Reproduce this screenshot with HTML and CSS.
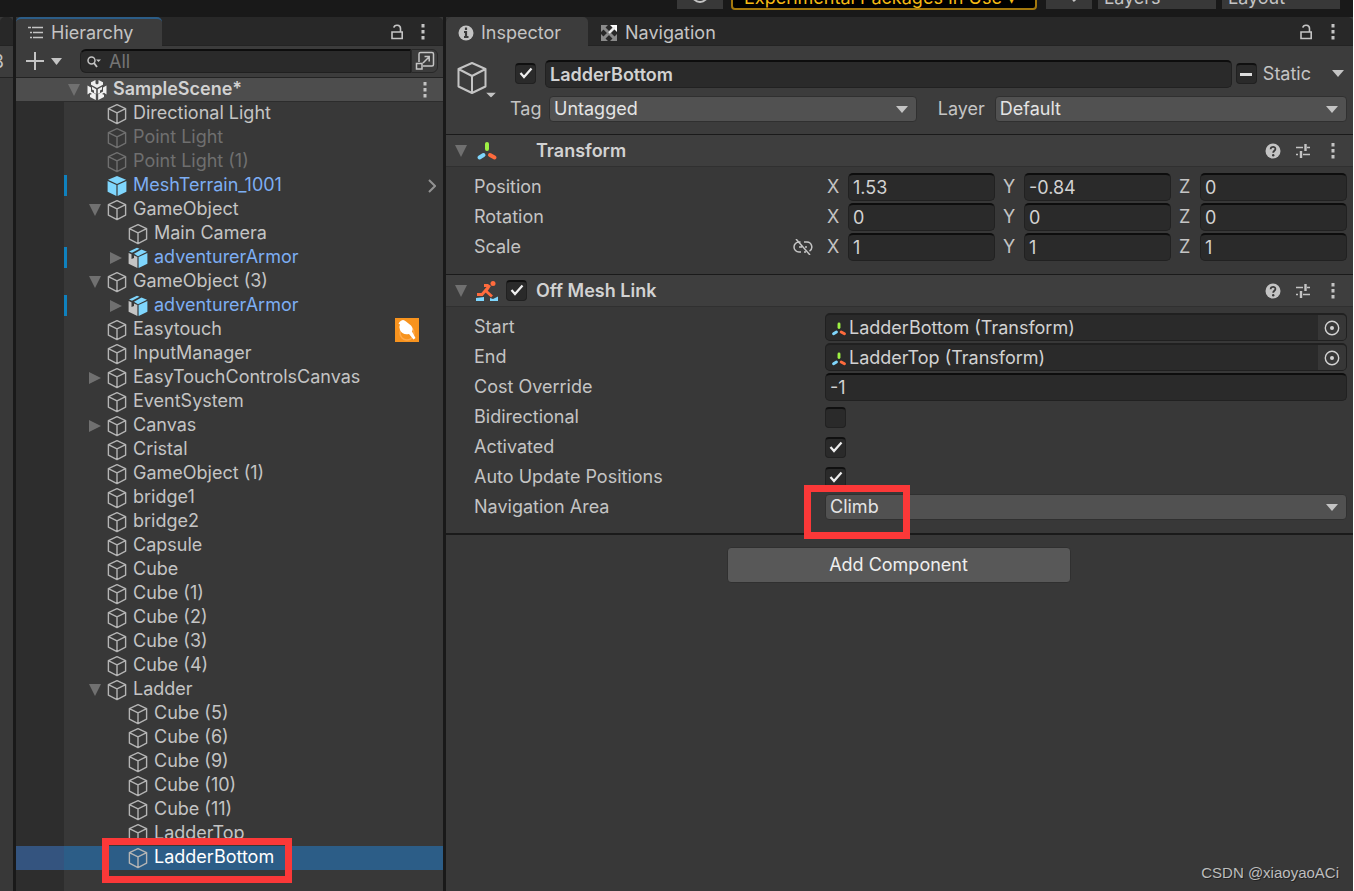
FILE: index.html
```html
<!DOCTYPE html>
<html lang="en">
<head>
<meta charset="utf-8">
<title>Hierarchy and Inspector</title>
<link rel="stylesheet" href="styles.css">
</head>
<body>
<svg class="defs" aria-hidden="true">
  <symbol id="cube" viewBox="0 0 20 22"><path d="M10 1.6 18.6 5.6V16.2L10 20.6 1.4 16.2V5.6ZM1.4 5.6 10 9.8 18.6 5.6M10 9.8V20.6" fill="none" stroke="currentColor" stroke-width="1.4" stroke-linejoin="round"/></symbol>
  <symbol id="prefab" viewBox="0 0 20 22"><path d="M10 1 19 4.8 10 9 1 4.8Z" fill="#7fd6fd"/><path d="M.6 6 9.4 10V21L.6 16.8ZM19.4 6 10.6 10V21L19.4 16.8Z" fill="#7fd6fd"/></symbol>
  <symbol id="model" viewBox="0 0 20 22"><path d="M1 4.600 9 .8 11.500 1.800 4 5.800ZM6 6.800 13.500 2.600 19 4.800 10 9.200Z" fill="#7fd6fd"/><path d="M19.400 6V16.800L10.600 21V10Z" fill="#7fd6fd"/><path d="M.6 6 3.500 7.300V12L6 11V8.400L9.400 10V21L.6 16.800Z" fill="#c4c4c4"/></symbol>
  <symbol id="down" viewBox="0 0 12 12"><path d="M0 0H12L6 12Z" fill="currentColor"/></symbol>
  <symbol id="right" viewBox="0 0 12 12"><path d="M0 0 12 6 0 12Z" fill="currentColor"/></symbol>
  <symbol id="caret" viewBox="0 0 12 6"><path d="M0 0H12L6 6Z" fill="currentColor"/></symbol>
  <symbol id="dots" viewBox="0 0 4 16"><path d="M.5 0h3v3.500h-3ZM.5 6h3v3.500h-3ZM.5 12h3v3.500h-3Z" fill="currentColor"/></symbol>
  <symbol id="lock" viewBox="0 0 14 16"><path d="M2 8H12.200V14.500H2ZM10.500 8V4.500C10.500 .5 4.500 .3 3.800 3.600" fill="none" stroke="currentColor" stroke-width="1.600"/></symbol>
  <symbol id="axes" viewBox="0 0 22 20"><path d="M11 3V8" stroke="#9ef044" stroke-width="4" stroke-linecap="round"/><path d="M3.500 16.500 7.500 14" stroke="#7fd6fd" stroke-width="4" stroke-linecap="round"/><path d="M14 14 18.500 16.500" stroke="#ff6b3d" stroke-width="4" stroke-linecap="round"/></symbol>
  <symbol id="help" viewBox="0 0 16 16"><circle cx="8" cy="8" r="7.500" fill="currentColor"/><path d="M5.600 6.200C5.700 3 10.500 3.200 10.400 6 10.400 7.800 8.200 7.800 8.200 9.800" fill="none" stroke="#3a3a3a" stroke-width="1.800"/><circle cx="8.200" cy="12.200" r="1.200" fill="#3a3a3a"/></symbol>
  <symbol id="sliders" viewBox="0 0 16 16"><path d="M1 4.500H8M12 4.500H15M1 11.500H3M8 11.500H15" stroke="currentColor" stroke-width="1.600"/><path d="M10.500 1V8M6 8V15" stroke="currentColor" stroke-width="2.400"/></symbol>
  <symbol id="target" viewBox="0 0 16 16"><circle cx="8" cy="8" r="6.700" fill="none" stroke="currentColor" stroke-width="1.400"/><circle cx="8" cy="8" r="2" fill="currentColor"/></symbol>
</svg>
<div class="app">
  <header class="topbar">
    <button class="topbtn small" aria-label="History"><svg width="20" height="20" viewBox="0 0 20 20"><circle cx="10" cy="10" r="8" fill="none" stroke="currentColor" stroke-width="2"/></svg></button>
    <button class="topbtn warn">Experimental Packages In Use ▾</button>
    <button class="topbtn small" aria-label="Search"><svg width="20" height="20" viewBox="0 0 20 20"><circle cx="8" cy="7" r="5" fill="none" stroke="currentColor" stroke-width="2"/><path d="M11 11 16 17" stroke="currentColor" stroke-width="3"/></svg></button>
    <button class="topbtn menu">Layers</button>
    <button class="topbtn menu">Layout</button>
  </header>
  <div class="panels">
    <aside class="sliver"><div class="tabs"></div><div class="sliver-bar">8</div></aside>
    <section class="hierarchy">
      <div class="tabs">
        <button class="tab current"><svg width="16" height="14" viewBox="0 0 16 14"><path d="M0 1.500H3M4 1.500H15M5 6.500H15M5 11.500H15" stroke="currentColor" stroke-width="1.500"/><path d="M2 6.500H4M2 11.500H4" stroke="currentColor" stroke-width="1.500"/></svg>Hierarchy</button>
        <span class="tools"><button aria-label="Lock"><svg width="14" height="16"><use href="#lock"/></svg></button><button aria-label="Menu"><svg width="4" height="16"><use href="#dots"/></svg></button></span>
      </div>
      <div class="searchbar">
        <button class="add" aria-label="Add"><svg width="18" height="18" viewBox="0 0 18 18"><path d="M9 0V18M0 9H18" stroke="currentColor" stroke-width="2"/></svg><svg width="11" height="7" viewBox="0 0 12 6" preserveAspectRatio="none"><path d="M0 0H12L6 6Z" fill="currentColor"/></svg></button>
        <label class="search"><svg width="14" height="12" viewBox="0 0 14 12"><circle cx="4.500" cy="4.500" r="3.500" fill="none" stroke="currentColor" stroke-width="1.500"/><path d="M7 7 10 11" stroke="currentColor" stroke-width="1.800"/><path d="M9 3.500H14L11.500 6Z" fill="currentColor"/></svg><input type="text" placeholder="All" aria-label="Search hierarchy"></label>
        <button class="picker" aria-label="Open search"><svg width="20" height="20" viewBox="0 0 20 20"><path d="M4 11V3Q4 1.500 5.500 1.500H17Q18.500 1.500 18.500 3V13.500Q18.500 15 17 15H8M1.500 12.500H7V18H1.500ZM8 12 14 6M9.500 5.500H14.200V10.500" fill="none" stroke="currentColor" stroke-width="1.500"/></svg></button>
      </div>
      <div class="scene">
        <button class="fold" aria-label="Collapse"><svg width="12" height="12"><use href="#down"/></svg></button>
        <svg class="unity" width="20" height="20" viewBox="0 0 20 20"><path d="M8.500 0 4 2.200V4.800L10 8 16 4.800V2.200L11.500 0V3.500L10 4.500 8.500 3.500ZM.5 5.500 4 7.500V11.500L8.800 14.300V20L3 17V14.800L5 14 3 12.800 .5 14.500ZM19.500 5.500 16 7.500V11.500L11.200 14.300V20L17 17V14.800L15 14 17 12.800 19.500 14.500ZM5 6.800 9.200 9.200V14L7 12.800V10.500L5 9.400ZM15 6.800 10.800 9.200V14L13 12.800V10.500L15 9.400Z" fill="#f0f0f0"/></svg>
        <strong>SampleScene*</strong>
        <button class="more" aria-label="Scene menu"><svg width="4" height="16"><use href="#dots"/></svg></button>
      </div>
      <ul class="tree">
        <li><span class="fold"></span><svg><use href="#cube"/></svg><span>Directional Light</span></li>
        <li class="off"><span class="fold"></span><svg><use href="#cube"/></svg><span>Point Light</span></li>
        <li class="off"><span class="fold"></span><svg><use href="#cube"/></svg><span>Point Light (1)</span></li>
        <li class="link"><span class="fold"></span><svg><use href="#prefab"/></svg><span>MeshTerrain_1001</span><button class="open" aria-label="Open prefab"><svg viewBox="0 0 8 14"><path d="M1 1 7 7 1 13" fill="none" stroke="currentColor" stroke-width="2"/></svg></button></li>
        <li><button class="fold" aria-label="Collapse"><svg><use href="#down"/></svg></button><svg><use href="#cube"/></svg><span>GameObject</span></li>
        <li class="child"><span class="fold"></span><svg><use href="#cube"/></svg><span>Main Camera</span></li>
        <li class="child link"><button class="fold" aria-label="Expand"><svg><use href="#right"/></svg></button><svg><use href="#model"/></svg><span>adventurerArmor</span></li>
        <li><button class="fold" aria-label="Collapse"><svg><use href="#down"/></svg></button><svg><use href="#cube"/></svg><span>GameObject (3)</span></li>
        <li class="child link"><button class="fold" aria-label="Expand"><svg><use href="#right"/></svg></button><svg><use href="#model"/></svg><span>adventurerArmor</span></li>
        <li><span class="fold"></span><svg><use href="#cube"/></svg><span>Easytouch</span><svg class="badge" viewBox="0 0 24 24"><path d="M0 0H24V24H0Z" fill="#f7931e"/><circle cx="12" cy="15" r="7" fill="none" stroke="#ffa94a" stroke-width="1.500"/><path d="M3.500 5.500 5 3.500Q8 .5 11 3.500L16 7.500Q18.500 10.500 17 13.500L20.500 20 18.500 21.500 14 16Q8 17.500 5 12Q3.500 9.500 5 6.500Z" fill="#fff"/></svg></li>
        <li><span class="fold"></span><svg><use href="#cube"/></svg><span>InputManager</span></li>
        <li><button class="fold" aria-label="Expand"><svg><use href="#right"/></svg></button><svg><use href="#cube"/></svg><span>EasyTouchControlsCanvas</span></li>
        <li><span class="fold"></span><svg><use href="#cube"/></svg><span>EventSystem</span></li>
        <li><button class="fold" aria-label="Expand"><svg><use href="#right"/></svg></button><svg><use href="#cube"/></svg><span>Canvas</span></li>
        <li><span class="fold"></span><svg><use href="#cube"/></svg><span>Cristal</span></li>
        <li><span class="fold"></span><svg><use href="#cube"/></svg><span>GameObject (1)</span></li>
        <li><span class="fold"></span><svg><use href="#cube"/></svg><span>bridge1</span></li>
        <li><span class="fold"></span><svg><use href="#cube"/></svg><span>bridge2</span></li>
        <li><span class="fold"></span><svg><use href="#cube"/></svg><span>Capsule</span></li>
        <li><span class="fold"></span><svg><use href="#cube"/></svg><span>Cube</span></li>
        <li><span class="fold"></span><svg><use href="#cube"/></svg><span>Cube (1)</span></li>
        <li><span class="fold"></span><svg><use href="#cube"/></svg><span>Cube (2)</span></li>
        <li><span class="fold"></span><svg><use href="#cube"/></svg><span>Cube (3)</span></li>
        <li><span class="fold"></span><svg><use href="#cube"/></svg><span>Cube (4)</span></li>
        <li><button class="fold" aria-label="Collapse"><svg><use href="#down"/></svg></button><svg><use href="#cube"/></svg><span>Ladder</span></li>
        <li class="child"><span class="fold"></span><svg><use href="#cube"/></svg><span>Cube (5)</span></li>
        <li class="child"><span class="fold"></span><svg><use href="#cube"/></svg><span>Cube (6)</span></li>
        <li class="child"><span class="fold"></span><svg><use href="#cube"/></svg><span>Cube (9)</span></li>
        <li class="child"><span class="fold"></span><svg><use href="#cube"/></svg><span>Cube (10)</span></li>
        <li class="child"><span class="fold"></span><svg><use href="#cube"/></svg><span>Cube (11)</span></li>
        <li class="child"><span class="fold"></span><svg><use href="#cube"/></svg><span>LadderTop</span></li>
        <li class="child selected"><span class="fold"></span><svg><use href="#cube"/></svg><span>LadderBottom</span><i class="mark mark-item"></i></li>
      </ul>
    </section>
    <main class="inspector">
      <div class="tabs">
        <button class="tab active"><svg width="16" height="16" viewBox="0 0 16 16"><circle cx="8" cy="8" r="7.500" fill="currentColor"/><path d="M8 2.500V5M6 7H8V12M6 12H10.500" stroke="#3c3c3c" stroke-width="2.200" fill="none"/></svg>Inspector</button>
        <button class="tab"><svg width="18" height="18" viewBox="0 0 18 18"><path d="M3 3 15 15M15 3 3 15" stroke="#8a8a8a" stroke-width="3"/><path d="M1 1H8L1 8ZM1 17V10L8 17ZM17 17H10L17 10Z" fill="#8a8a8a"/><path d="M17 1V8L10 1Z" fill="#fff"/><path d="M15 3 9 9" stroke="#eee" stroke-width="2.200"/></svg>Navigation</button>
        <span class="tools"><button aria-label="Lock"><svg width="14" height="16"><use href="#lock"/></svg></button><button aria-label="Menu"><svg width="4" height="16"><use href="#dots"/></svg></button></span>
      </div>
      <div class="object">
        <button class="object-icon" aria-label="Choose icon"><svg class="big" viewBox="0 0 30 34"><path d="M15 2 28.500 8V25.500L15 32 1.500 25.500V8ZM1.500 8 15 15 28.500 8M15 15V32" fill="none" stroke="currentColor" stroke-width="2" stroke-linejoin="round"/></svg><svg class="small-caret" viewBox="0 0 12 6"><use href="#caret"/></svg></button>
        <div class="object-fields">
          <div class="name-row">
            <input type="checkbox" checked aria-label="Active">
            <input class="field name" type="text" value="LadderBottom" aria-label="Name">
            <label class="static"><input class="mixed" type="checkbox">Static</label>
            <button class="drop" aria-label="Static options"><svg width="12" height="7" viewBox="0 0 12 6" preserveAspectRatio="none"><path d="M0 0H12L6 6Z" fill="currentColor"/></svg></button>
          </div>
          <div class="tag-row">
            <label for="tag">Tag</label><select id="tag"><option>Untagged</option></select>
            <label class="layer" for="layer">Layer</label><select id="layer"><option>Default</option></select>
          </div>
        </div>
      </div>
      <section class="component">
        <header><button class="fold" aria-label="Collapse"><svg width="12" height="12"><use href="#down"/></svg></button><svg class="kind" viewBox="0 0 22 20"><use href="#axes"/></svg><span class="nocheck"></span><h2>Transform</h2>
          <span class="tools"><button aria-label="Help"><svg width="16" height="16"><use href="#help"/></svg></button><button aria-label="Presets"><svg width="16" height="16"><use href="#sliders"/></svg></button><button aria-label="Menu"><svg width="4" height="16"><use href="#dots"/></svg></button></span></header>
        <div class="props">
          <div class="prop"><span>Position</span><div class="vec"><label>X<input class="field" type="text" value="1.53"></label><label>Y<input class="field" type="text" value="-0.84"></label><label>Z<input class="field" type="text" value="0"></label></div></div>
          <div class="prop"><span>Rotation</span><div class="vec"><label>X<input class="field" type="text" value="0"></label><label>Y<input class="field" type="text" value="0"></label><label>Z<input class="field" type="text" value="0"></label></div></div>
          <div class="prop"><span class="scale">Scale<button aria-label="Constrain proportions"><svg width="20" height="16" viewBox="0 0 20 16"><path d="M7.500 3H6A5 5 0 0 0 6 13H8M11 3H14A5 5 0 0 1 16.500 12.200M13 13H11M6 8H9M12 8H14M3 0 17 16" fill="none" stroke="currentColor" stroke-width="1.500"/></svg></button></span><div class="vec"><label>X<input class="field" type="text" value="1"></label><label>Y<input class="field" type="text" value="1"></label><label>Z<input class="field" type="text" value="1"></label></div></div>
        </div>
      </section>
      <section class="component last">
        <header><button class="fold" aria-label="Collapse"><svg width="12" height="12"><use href="#down"/></svg></button><svg class="kind" viewBox="0 0 22 20"><circle cx="17" cy="2.500" r="2.500" fill="#ff6b3d"/><path d="M8 4.500H11.500L13 5.500 10 10 16 15.500M12 6.500 6 13.500H1" fill="none" stroke="#ff6b3d" stroke-width="2.800"/><path d="M0 17 8 16V20H0ZM14 17 17 18 22 15.500V20H14Z" fill="#7fd6fd"/></svg><span class="nocheck"><input type="checkbox" checked aria-label="Enabled"></span><h2>Off Mesh Link</h2>
          <span class="tools"><button aria-label="Help"><svg width="16" height="16"><use href="#help"/></svg></button><button aria-label="Presets"><svg width="16" height="16"><use href="#sliders"/></svg></button><button aria-label="Menu"><svg width="4" height="16"><use href="#dots"/></svg></button></span></header>
        <div class="props">
          <div class="prop"><span>Start</span><div class="field ref"><svg class="mini"><use href="#axes"/></svg><span>LadderBottom (Transform)</span><button aria-label="Pick start"><svg width="16" height="16"><use href="#target"/></svg></button></div></div>
          <div class="prop"><span>End</span><div class="field ref"><svg class="mini"><use href="#axes"/></svg><span>LadderTop (Transform)</span><button aria-label="Pick end"><svg width="16" height="16"><use href="#target"/></svg></button></div></div>
          <div class="prop"><label for="cost">Cost Override</label><input id="cost" class="field" type="text" value="-1"></div>
          <div class="prop"><label for="bi">Bidirectional</label><input id="bi" type="checkbox"></div>
          <div class="prop"><label for="act">Activated</label><input id="act" type="checkbox" checked></div>
          <div class="prop"><label for="auto">Auto Update Positions</label><input id="auto" type="checkbox" checked></div>
          <div class="prop"><label for="area">Navigation Area</label><div class="area"><select id="area"><option>Climb</option></select><i class="mark mark-area"></i></div></div>
        </div>
      </section>
      <button class="add-component">Add Component</button>
      <p class="credit">CSDN @xiaoyaoACi</p>
    </main>
  </div>
</div>
</body>
</html>
```

FILE: styles.css
```css
* { box-sizing: border-box; }
body {
  margin: 0;
  background: #fff;
  color: #c4c4c4;
  font: 18px/24px Inter, "Liberation Sans", sans-serif;
}
button, input, select { font: inherit; color: inherit; margin: 0; }
button { border: 0; padding: 0; background: none; display: inline-flex; align-items: center; }
svg { display: block; flex: none; }
h2, p, ul { margin: 0; padding: 0; }
.defs { position: absolute; width: 0; height: 0; }

.app { height: 100vh; margin-right: 1px; display: flex; flex-direction: column; background: #191919; overflow: hidden; }

.topbar { height: 17px; flex: none; display: flex; justify-content: flex-end; align-items: flex-end; gap: 6px; padding: 0 13px 8px 0; }
.topbtn { height: 30px; flex: none; background: #383838; padding: 0 6px; }
.topbtn.small { width: 46px; justify-content: center; }
.topbtn.menu { width: 118px; padding-top: 8px; }
.topbtn.warn { width: 306px; height: 32px; margin: 0 3px -1px 2px; padding: 8px 11px 0; background: #000; border: 2px solid #a3780d; border-radius: 4px; color: #f5bb14; white-space: nowrap; }

.panels { flex: 1; min-height: 0; display: flex; gap: 3px; }
.sliver { width: 13px; flex: none; background: #383838; }
.sliver-bar { height: 32px; background: #3c3c3c; border-bottom: 1px solid #232323; line-height: 32px; display: flex; justify-content: flex-end; padding-right: 9px; overflow: hidden; }
.hierarchy { width: 427px; flex: none; display: flex; flex-direction: column; background: #383838; }
.inspector { flex: 1; min-width: 0; display: flex; flex-direction: column; background: #383838; position: relative; }

.tabs { height: 29px; flex: none; display: flex; background: #282828; border-radius: 5px 5px 0 0; box-shadow: inset 0 -1px #232323; }
.tab { gap: 7px; padding: 3px 27px 0 12px; border-radius: 5px 5px 0 0; }
.tab.active, .tab.current { background: #3c3c3c; }
.tab.current { padding-top: 1px; padding-right: 29px; border-top: 2px solid #2c5d87; }
.tools { margin-left: auto; display: flex; align-items: center; gap: 18px; padding-right: 18px; }
.hierarchy .tools { gap: 17px; }

.searchbar { height: 32px; flex: none; display: flex; align-items: center; padding: 0 5px 1px 10px; background: #3c3c3c; border-bottom: 1px solid #232323; }
.add { width: 54px; gap: 7px; }
.search { flex: 1; height: 24px; display: flex; align-items: center; gap: 8px; padding-left: 6px; background: #2a2a2a; border: 1px solid #202020; border-top: 2px solid #0d0d0d; border-radius: 6px 0 0 6px; }
.search input { flex: 1; min-width: 0; padding: 0; border: 0; outline: 0; background: none; }
.search input::placeholder { color: #757575; opacity: 1; }
.picker { width: 27px; height: 24px; justify-content: center; border: 1px solid #282828; border-radius: 0 6px 6px 0; }

.fold { color: #707070; width: 12px; flex: none; }
.scene { height: 24px; flex: none; display: flex; align-items: center; padding: 0 16px 0 52px; background: #4d4d4d; border-bottom: 1px solid #2c2c2c; }
.scene .unity { margin: 0 6px 0 7px; }
.scene strong { font-weight: 600; color: #d2d2d2; padding-bottom: 2px; }
.more { margin-left: auto; }

.tree { flex: 1; list-style: none; background: linear-gradient(to right, #2d2d2d 48px, #383838 48px); }
.tree li { position: relative; height: 24px; display: flex; align-items: center; padding: 0 7px 0 73px; white-space: nowrap; }
.tree li.child { padding-left: 94px; }
.tree li > svg { width: 20px; height: 22px; margin: 0 6px; color: #b4b4b4; }
.tree li > span { padding-bottom: 2px; }
.fold svg { width: 12px; height: 12px; }
.tree li.off, .tree li.off > svg { color: #6f6f6f; }
.tree li.link { color: #7daef3; }
.tree li.link::before { content: ""; position: absolute; left: 48px; top: 1px; width: 3px; height: 21px; background: #0f81be; }
.tree li.selected { color: #fff; background: linear-gradient(to right, #34547f 48px, #2c5d87 48px); }
.tree .open { margin-left: auto; color: #929292; }
.tree .open svg { width: 8px; height: 14px; }
.tree li > svg.badge { width: 24px; height: 24px; margin: 0 17px 0 auto; }

.mark { position: absolute; border: 7px solid #fb3838; pointer-events: none; z-index: 2; }
.mark-item { left: 86px; top: -8px; width: 190px; height: 45px; }
.mark-area { left: -21px; top: -9px; width: 106px; height: 54px; }

.object { flex: none; display: flex; padding: 14px 6px 12px 11px; background: #3c3c3c; }
.object-icon { width: 53px; align-items: flex-start; padding-top: 1px; }
.big { width: 30px; height: 34px; }
.small-caret { width: 10px; height: 6px; margin: 31px 0 0 -1px; }
.object-fields { flex: 1; min-width: 0; display: flex; flex-direction: column; gap: 9px; }
.name-row { display: flex; align-items: center; padding-left: 5px; height: 27px; }
.name { flex: 1; min-width: 0; margin: 0 4px 0 9px; font-weight: 600; }
.static { display: flex; align-items: center; gap: 6px; }
.drop { margin: 0 3px 0 21px; }
.tag-row { display: flex; align-items: center; }
.tag-row label { width: 39px; flex: none; }
.tag-row .layer { width: 57px; margin-left: 21px; }
.tag-row select { flex: 368 1 0; }
.tag-row #layer { flex-grow: 351; }

.field { height: 28px; min-width: 0; padding: 0 4px; background: #2a2a2a; border: 1px solid #212121; border-top: 2px solid #0d0d0d; border-radius: 5px; outline: 0; color: #d2d2d2; }
select { height: 26px; min-width: 0; appearance: none; padding: 0 24px 0 4px; border: 1px solid #303030; border-radius: 4px; outline: 0; color: #e4e4e4; background: #515151 url("data:image/svg+xml,%3Csvg xmlns='http://www.w3.org/2000/svg' width='12' height='7'%3E%3Cpath d='M0 0H12L6 7Z' fill='%23c4c4c4'/%3E%3C/svg%3E") no-repeat right 8px center; }
input[type="checkbox"] { appearance: none; flex: none; width: 21px; height: 21px; background: #2a2a2a center no-repeat; border: 1px solid #212121; border-top: 2px solid #101010; border-radius: 4px; }
input[type="checkbox"]:checked { background-image: url("data:image/svg+xml,%3Csvg xmlns='http://www.w3.org/2000/svg' width='14' height='14'%3E%3Cpath d='M1.500 6 5 10 12.500 1.500' fill='none' stroke='%23eee' stroke-width='2.200'/%3E%3C/svg%3E"); }
input[type="checkbox"].mixed { background-image: linear-gradient(#ddd, #ddd); background-size: 12px 3px; }

.component { flex: none; border-top: 1px solid #1a1a1a; }
.component header { height: 32px; display: flex; align-items: center; padding: 0 0 0 9px; background: #3e3e3e; border-bottom: 1px solid #303030; }
.component.last { border-bottom: 2px solid #1a1a1a; }
.kind { width: 22px; height: 20px; margin: 0 8px 0 9px; }
.nocheck { width: 30px; display: flex; }
h2 { font-size: 18px; font-weight: 600; color: #d2d2d2; }
.component .tools { gap: 14px; padding: 0 18px 0 0; }
.component .tools button:last-child { margin-left: 6px; }
.props { display: flex; flex-direction: column; gap: 2px; padding: 6px 6px 13px 28px; }
.last .props { padding-bottom: 12px; }
.prop { display: grid; grid-template-columns: minmax(0, 351fr) minmax(0, 522fr); align-items: center; min-height: 28px; }
.vec { display: grid; grid-template-columns: repeat(3, minmax(0, 1fr)); gap: 6px; }
.vec label { display: grid; grid-template-columns: 21px minmax(0, 1fr); align-items: center; padding-left: 2px; }
.scale { display: flex; justify-content: space-between; padding-right: 12px; }
.ref { display: flex; align-items: center; border-color: #202020; padding-right: 0; }
.ref > span { flex: 1; }
.mini { width: 16px; height: 16px; margin: 2px 2px 0 1px; }
.ref button { width: 28px; height: 100%; justify-content: center; background: #373737; border-radius: 0 4px 4px 0; }
.area { position: relative; display: flex; }
.area select { flex: 1; }
.add-component { align-self: center; width: 344px; height: 36px; margin: 12px 2px 0 0; justify-content: center; background: #585858; border: 1px solid #303030; border-radius: 4px; color: #eee; }
.credit { margin-top: auto; padding: 0 14px 6px 0; text-align: right; font: 15px/24px "Liberation Sans", sans-serif; color: #bdbdbd; text-shadow: 1px 1px #222; }
```
